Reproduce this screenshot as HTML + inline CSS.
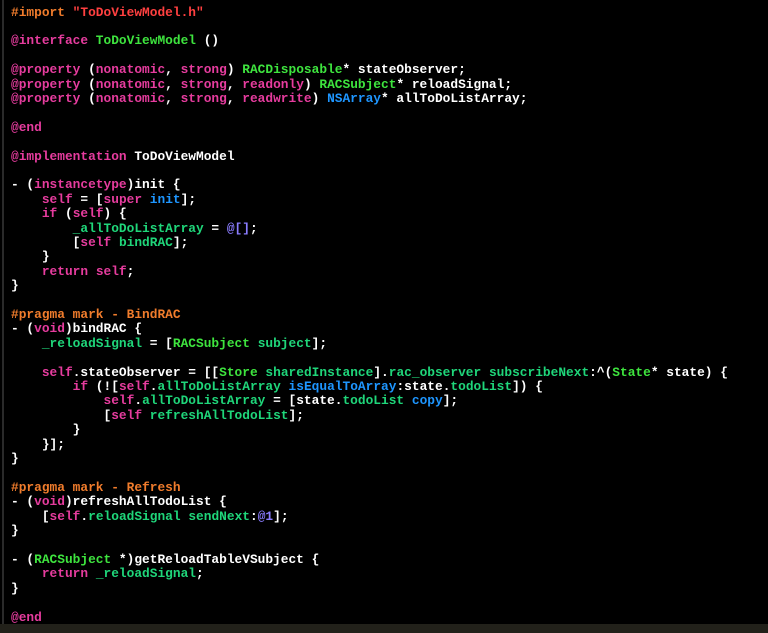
<!DOCTYPE html>
<html><head><meta charset="utf-8"><style>
html,body{margin:0;padding:0;background:#000;width:768px;height:633px;overflow:hidden}
.bar{position:absolute;left:2px;top:0;width:2px;height:624px;background:#2a2a2a}
.bot{position:absolute;left:0;top:624px;width:768px;height:9px;background:#22211a}
pre{position:absolute;left:11px;top:5.5px;margin:0;font-family:"Liberation Mono",monospace;font-size:12.85px;line-height:14.4px;color:#fff;white-space:pre;font-weight:bold}
.p{color:#f07c2c}.s{color:#ff4040}.k{color:#e63c9e}.c{color:#3ee43e}.g{color:#1fd67a}.b{color:#1e96ff}.v{color:#8a7cff}
</style></head><body>
<div class="bar"></div><div class="bot"></div>
<pre><span class="p">#import</span> <span class="s">"ToDoViewModel.h"</span>

<span class="k">@interface</span> <span class="c">ToDoViewModel</span> ()

<span class="k">@property</span> (<span class="k">nonatomic</span>, <span class="k">strong</span>) <span class="c">RACDisposable</span>* stateObserver;
<span class="k">@property</span> (<span class="k">nonatomic</span>, <span class="k">strong</span>, <span class="k">readonly</span>) <span class="c">RACSubject</span>* reloadSignal;
<span class="k">@property</span> (<span class="k">nonatomic</span>, <span class="k">strong</span>, <span class="k">readwrite</span>) <span class="b">NSArray</span>* allToDoListArray;

<span class="k">@end</span>

<span class="k">@implementation</span> ToDoViewModel

- (<span class="k">instancetype</span>)init {
    <span class="k">self</span> = [<span class="k">super</span> <span class="b">init</span>];
    <span class="k">if</span> (<span class="k">self</span>) {
        <span class="g">_allToDoListArray</span> = <span class="v">@[]</span>;
        [<span class="k">self</span> <span class="g">bindRAC</span>];
    }
    <span class="k">return</span> <span class="k">self</span>;
}

<span class="p">#pragma mark - BindRAC</span>
- (<span class="k">void</span>)bindRAC {
    <span class="g">_reloadSignal</span> = [<span class="c">RACSubject</span> <span class="g">subject</span>];

    <span class="k">self</span>.stateObserver = [[<span class="c">Store</span> <span class="g">sharedInstance</span>].<span class="g">rac_observer</span> <span class="g">subscribeNext</span>:^(<span class="c">State</span>* state) {
        <span class="k">if</span> (![<span class="k">self</span>.<span class="g">allToDoListArray</span> <span class="b">isEqualToArray</span>:state.<span class="g">todoList</span>]) {
            <span class="k">self</span>.<span class="g">allToDoListArray</span> = [state.<span class="g">todoList</span> <span class="b">copy</span>];
            [<span class="k">self</span> <span class="g">refreshAllTodoList</span>];
        }
    }];
}

<span class="p">#pragma mark - Refresh</span>
- (<span class="k">void</span>)refreshAllTodoList {
    [<span class="k">self</span>.<span class="g">reloadSignal</span> <span class="g">sendNext</span>:<span class="v">@1</span>];
}

- (<span class="c">RACSubject</span> *)getReloadTableVSubject {
    <span class="k">return</span> <span class="g">_reloadSignal</span>;
}

<span class="k">@end</span></pre>
</body></html>
